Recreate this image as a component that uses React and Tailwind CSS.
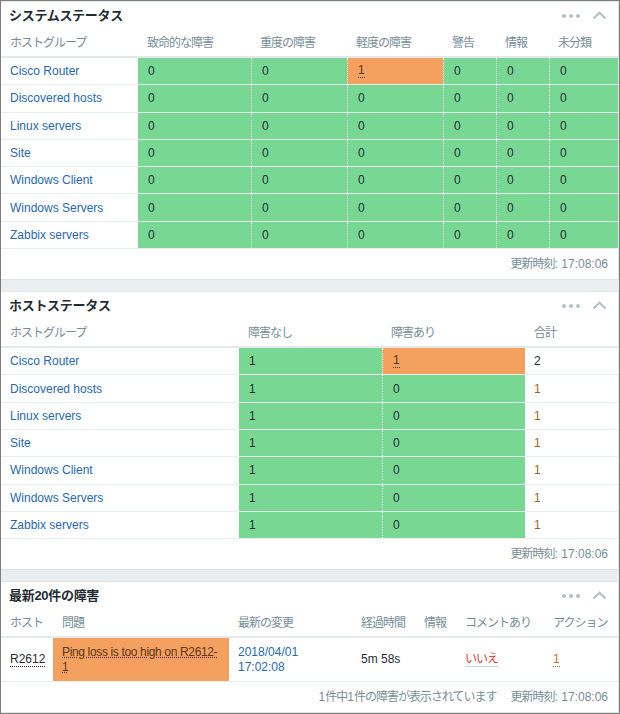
import React from 'react';

const GROUPS = [
    'Cisco Router',
    'Discovered hosts',
    'Linux servers',
    'Site',
    'Windows Client',
    'Windows Servers',
    'Zabbix servers',
];

const GREEN = 'bg-[#78d893]';
const ORANGE = 'bg-[#f4a15f]';

function WidgetHead({ title }) {
    return (
        <div className="flex h-[27px] items-center justify-between pl-[8px] pr-[11px]">
            <h4 className="text-[13px] font-bold tracking-[-0.3px] text-[#1f2c33]">{title}</h4>
            <div className="flex items-center gap-[12px]">
                <div className="flex items-center gap-[3px]">
                    <span className="h-[4px] w-[4px] rounded-full bg-[#b3c1c8]"></span>
                    <span className="h-[4px] w-[4px] rounded-full bg-[#b3c1c8]"></span>
                    <span className="h-[4px] w-[4px] rounded-full bg-[#b3c1c8]"></span>
                </div>
                <svg width="15" height="9" viewBox="0 0 15 9" fill="none">
                    <path d="M1.5 7.5 L7.5 1.8 L13.5 7.5" stroke="#b3c1c8" strokeWidth="2.2" />
                </svg>
            </div>
        </div>
    );
}

function Footer({ children }) {
    return (
        <div className="flex h-[30px] items-center justify-end gap-[14px] pr-[10px] text-[12px] text-[#768d99]">
            {children}
        </div>
    );
}

function Updated() {
    return (
        <span>
            <span className="tracking-[-1px]">更新時刻</span>: 17:08:06
        </span>
    );
}

function HeaderRow({ cols }) {
    return (
        <div className="flex h-[29px] items-center border-b-2 border-[#e4e8ea] text-[12px] tracking-[-1px] text-[#768d99]">
            {cols.map(([label, w]) => (
                <div key={label} className="shrink-0 pl-[9px]" style={{ width: w }}>
                    {label}
                </div>
            ))}
        </div>
    );
}

function Mark({ children, className = 'text-[#5c3517] border-[#5c3517]' }) {
    return <span className={`border-b border-dotted leading-[13px] ${className}`}>{children}</span>;
}

function SystemStatus() {
    const widths = [137, 113, 96, 96, 53, 53, 69];
    const cols = ['ホストグループ', '致命的な障害', '重度の障害', '軽度の障害', '警告', '情報', '未分類'];
    return (
        <div className="border-y border-r border-[#dfe4e7] bg-white">
            <WidgetHead title="システムステータス" />
            <HeaderRow cols={cols.map((c, i) => [c, widths[i]])} />
            {GROUPS.map((g) => (
                <div key={g} className="flex h-[27.3px] border-b border-[#e8eef0] text-[12px]">
                    <div className="flex shrink-0 items-center pl-[9px] text-[#2769b1]" style={{ width: widths[0] }}>
                        {g}
                    </div>
                    {widths.slice(1).map((w, i) => {
                        const hit = g === 'Cisco Router' && i === 2;
                        return (
                            <div
                                key={i}
                                className={`flex shrink-0 items-center pl-[10px] text-[#1f2c33] ${hit ? ORANGE : GREEN} ${i > 0 ? 'border-l border-dotted border-white' : ''}`}
                                style={{ width: w }}
                            >
                                {hit ? <Mark>1</Mark> : '0'}
                            </div>
                        );
                    })}
                </div>
            ))}
            <Footer>
                <Updated />
            </Footer>
        </div>
    );
}

function HostStatus() {
    const widths = [238, 143, 143, 93];
    const cols = ['ホストグループ', '障害なし', '障害あり', '合計'];
    return (
        <div className="border-y border-r border-[#dfe4e7] bg-white">
            <WidgetHead title="ホストステータス" />
            <HeaderRow cols={cols.map((c, i) => [c, widths[i]])} />
            {GROUPS.map((g) => {
                const hit = g === 'Cisco Router';
                return (
                    <div key={g} className="flex h-[27.3px] border-b border-[#e8eef0] text-[12px]">
                        <div className="flex shrink-0 items-center pl-[9px] text-[#2769b1]" style={{ width: widths[0] }}>
                            {g}
                        </div>
                        <div className={`flex shrink-0 items-center pl-[10px] text-[#1f2c33] ${GREEN}`} style={{ width: widths[1] }}>
                            1
                        </div>
                        <div
                            className={`flex shrink-0 items-center border-l border-dotted border-white pl-[10px] text-[#1f2c33] ${hit ? ORANGE : GREEN}`}
                            style={{ width: widths[2] }}
                        >
                            {hit ? <Mark>1</Mark> : '0'}
                        </div>
                        <div
                            className={`flex shrink-0 items-center pl-[9px] ${hit ? 'text-[#1f2c33]' : 'text-[#a8621d]'}`}
                            style={{ width: widths[3] }}
                        >
                            {hit ? '2' : '1'}
                        </div>
                    </div>
                );
            })}
            <Footer>
                <Updated />
            </Footer>
        </div>
    );
}

function Problems() {
    const widths = [52, 176, 123, 63, 41, 88, 74];
    const cols = ['ホスト', '問題', '最新の変更', '経過時間', '情報', 'コメントあり', 'アクション'];
    return (
        <div className="flex-1 border-y border-r border-[#dfe4e7] bg-white">
            <WidgetHead title="最新20件の障害" />
            <HeaderRow cols={cols.map((c, i) => [c, widths[i]])} />
            <div className="flex h-[44px] border-b border-[#e8eef0] text-[12px] leading-[15px]">
                <div className="flex shrink-0 items-center pl-[9px] text-[#1f2c33]" style={{ width: widths[0] }}>
                    <Mark className="text-[#1f2c33] border-[#1f2c33]">R2612</Mark>
                </div>
                <div className={`flex shrink-0 items-center pl-[9px] ${ORANGE}`} style={{ width: widths[1] }}>
                    <span className="tracking-[-0.35px] text-[#5c3517] underline decoration-dotted decoration-[#5c3517] underline-offset-[1px]">
                        Ping loss is too high on R2612-
                        <br />1
                    </span>
                </div>
                <div className="flex shrink-0 items-center pl-[9px] text-[#2769b1]" style={{ width: widths[2] }}>
                    <span>
                        2018/04/01
                        <br />
                        17:02:08
                    </span>
                </div>
                <div className="flex shrink-0 items-center pl-[9px] text-[#1f2c33]" style={{ width: widths[3] }}>
                    5m 58s
                </div>
                <div className="shrink-0" style={{ width: widths[4] }}></div>
                <div className="flex shrink-0 items-center pl-[9px]" style={{ width: widths[5] }}>
                    <span className="border-b border-[#c9d3d8] leading-[14px] tracking-[-1px] text-[#e33734]">いいえ</span>
                </div>
                <div className="flex shrink-0 items-center pl-[9px]" style={{ width: widths[6] }}>
                    <Mark className="text-[#c9731e] border-[#3b9a3b]">1</Mark>
                </div>
            </div>
            <Footer>
                <span>
                    1<span className="tracking-[-1px]">件中</span>1<span className="tracking-[-1px]">件の障害が表示されています</span>
                </span>
                <Updated />
            </Footer>
        </div>
    );
}

export default function App() {
    return (
        <div className="flex h-[714px] w-[620px] flex-col gap-[11px] border border-[#7d7d7d] bg-[#ebeef0] font-['Liberation_Sans','Noto_Sans_CJK_JP',sans-serif]">
            <SystemStatus />
            <HostStatus />
            <Problems />
        </div>
    );
}
